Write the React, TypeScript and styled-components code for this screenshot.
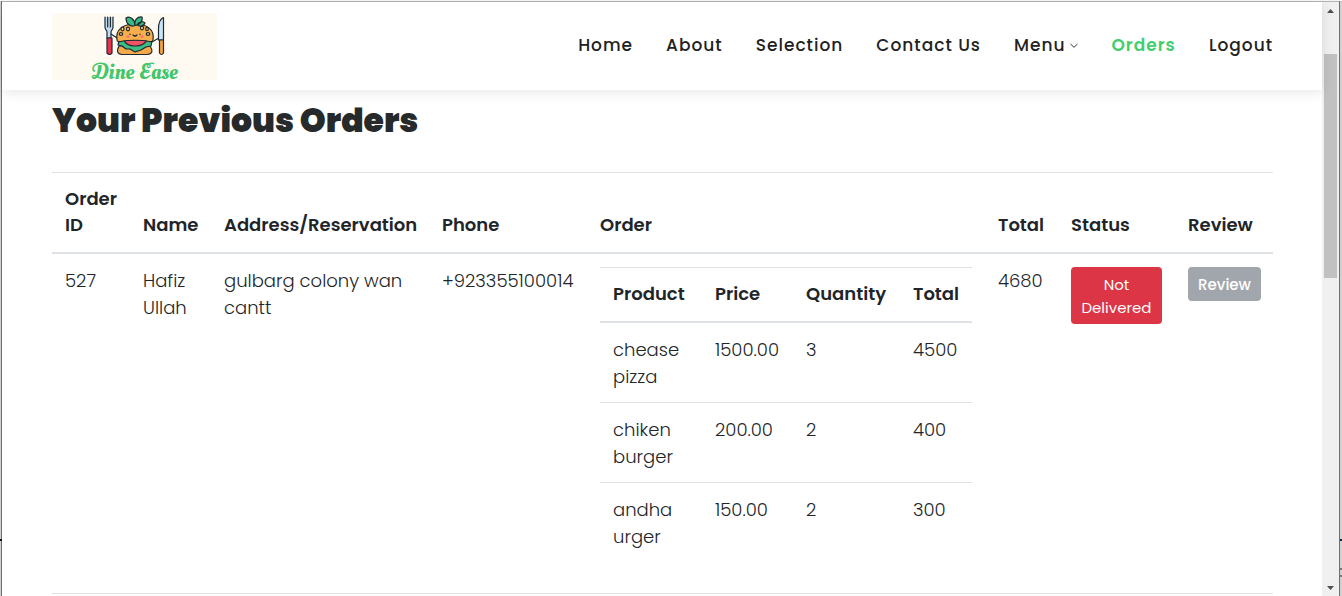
import React from "react";
import styled, { createGlobalStyle } from "styled-components";

const GlobalStyle = createGlobalStyle`
  *, *::before, *::after { box-sizing: border-box; }
  body {
    margin: 0;
    background: #fff;
    color: #212529;
    font-family: Poppins, Inter, "Liberation Sans", sans-serif;
    font-size: 18px;
    font-weight: 300;
    line-height: 27px;
  }
`;

const Window = styled.div`
  display: flex;
  height: 100vh;
  overflow: hidden;
  border-top: 1px solid #f4f4f4;
`;

const Edge = styled.div<{ $side: "left" | "right" }>`
  position: relative;
  flex: none;
  width: ${(p) => (p.$side === "left" ? 2 : 3)}px;
  background: #d0d0d0;
  border-${(p) => (p.$side === "left" ? "right" : "left")}: 1px solid #707070;
`;

const EdgeMark = styled.span<{ $bottom: number; $color: string }>`
  position: absolute;
  left: 0;
  bottom: ${(p) => p.$bottom}px;
  width: 2px;
  height: 2px;
  background: ${(p) => p.$color};
`;

const Page = styled.div`
  flex: 1;
  min-width: 0;
  border-top: 1px solid #b4b4b4;
`;

const Header = styled.header`
  position: relative;
  display: flex;
  align-items: center;
  justify-content: space-between;
  height: 88px;
  padding: 0 49px 0 50px;
  background: #fff;
  box-shadow: 0 2px 12px rgba(0, 0, 0, 0.1);
`;

const LogoLink = styled.a`
  display: flex;
  flex-direction: column;
  align-items: center;
  width: 165px;
  height: 67px;
  padding-top: 3px;
  background: #fffaf1;
  color: #42c66c;
  text-decoration: none;

  svg {
    flex: none;
  }
`;

const LogoName = styled.span`
  font: 400 22px/32px "Oleo Script Swash Caps", "Lobster", "Oleo Script", "Liberation Serif", serif;
`;

const Menu = styled.nav`
  display: flex;
  align-items: center;
  gap: 33px;
  padding-bottom: 2px;
`;

const MenuLink = styled.a<{ $active?: boolean }>`
  display: inline-flex;
  align-items: center;
  gap: 3px;
  color: ${(p) => (p.$active ? "#42cd6e" : "#212121")};
  font-size: 17px;
  font-weight: ${(p) => (p.$active ? 600 : 500)};
  letter-spacing: 1px;
  text-decoration: none;
`;

const Main = styled.main`
  padding: 10px 49px 0 50px;
`;

const Title = styled.h1`
  margin: 0 0 30px;
  color: #262a2a;
  font-size: 33px;
  font-weight: 900;
  line-height: 42px;
`;

const Table = styled.table`
  width: 100%;
  margin-bottom: 19px;
  table-layout: fixed;
  border-spacing: 0;
`;

const Col = styled.col<{ $width: number }>`
  width: ${(p) => p.$width}px;
`;

const HeadCell = styled.th`
  padding: 13px 0 14px 13px;
  border-top: 1px solid #dee2e6;
  border-bottom: 2px solid #dee2e6;
  font-weight: 600;
  line-height: 26px;
  text-align: left;
  vertical-align: bottom;
`;

const Cell = styled.td`
  padding: 13px 13px 12px;
  vertical-align: top;

  tr + tr > & {
    border-top: 1px solid #dee2e6;
  }
`;

const ActionButton = styled.button<{ $tone: "danger" | "muted" }>`
  display: block;
  padding: 6px ${(p) => (p.$tone === "danger" ? 8 : 10)}px 5px;
  border: 0;
  border-radius: 4px;
  background: ${(p) => (p.$tone === "danger" ? "#dc3545" : "#a0a6ab")};
  color: #fff;
  font-family: inherit;
  font-size: 15px;
  font-weight: ${(p) => (p.$tone === "danger" ? 400 : 500)};
  line-height: 23px;
`;

const ScrollBar = styled.div`
  display: flex;
  flex: none;
  flex-direction: column;
  align-items: center;
  width: 17px;
  border-top: 1px solid #b4b4b4;
  background: #f0f0f0;
`;

const Arrow = styled.svg`
  flex: none;
  width: 17px;
  height: 17px;
  fill: #505050;
`;

const Track = styled.div`
  flex: 1;
  width: 13px;
  padding-top: 35px;
`;

const Thumb = styled.div`
  height: 224px;
  background: #c1c1c1;
`;

const Burger = () => (
  <svg width="62" height="40" viewBox="0 0 62 40" aria-hidden="true" strokeLinejoin="round" strokeLinecap="round">
    <g stroke="#202830" strokeWidth="1.2">
      <path d="M7 18 16 24M55 22 46 27" fill="none" />
      <path d="M1 1v10c0 3 2 3 2 5v6h4v-6c0-2 2-2 2-5V1M3.700 1v10M6.400 1v10" fill="#bfdcf2" />
      <path d="M3 22h5v15q-2.500 3-5 0z" fill="#e8324a" />
      <path d="M59.500 1.500C56 3 54.500 8 54.500 13v11h5z" fill="#c9e3f7" />
      <path d="M55.500 24h4v13q-2 3-4 0z" fill="#f4a53a" />
      <path d="M15 30h31q5 8-3 8.500H18q-7-.5-3-8.500z" fill="#f6a94a" />
      <path d="M15 25q16-5 33 0l-1 5-5 1-5 3-6 2-5-3-4 0-4-3-4-1z" fill="#3dbb85" />
      <path d="M20 24h23q-3 6-12 6t-11-6z" fill="#ee5564" />
      <path d="M13 24C11 13 20 8 31 8s20 5 18 16c0 2-3 2-6 1-3-1-20-1-24 0-3 1-6 1-6-1z" fill="#f9ae4c" />
      <path d="M31 9.500c-5 2-9-2-9-7.500 4-3 9 2 9 7.500zM31 9.500c-1-5 2-9 7-8.500 1 4-2 8-7 8.500zM33 9c2-4 6-4 8-2-1 3-5 4-8 2z" fill="#37b982" />
      <g fill="#fde08a">
        <ellipse cx="18.500" cy="13" rx="1.500" ry="1.800" />
        <ellipse cx="24" cy="13" rx="1.500" ry="1.800" />
        <ellipse cx="17" cy="18" rx="1.700" ry="1.300" />
        <ellipse cx="38" cy="12" rx="1.500" ry="1.800" />
        <ellipse cx="43" cy="13" rx="1.300" ry="1.700" />
        <ellipse cx="44" cy="18" rx="1.700" ry="1.300" />
      </g>
      <path d="M26 18v.4M36 18v.4M29 19q2 2 4 0" fill="none" />
    </g>
    <g fill="#f5767f">
      <circle cx="24" cy="20.500" r="1.600" />
      <circle cx="38" cy="20.500" r="1.600" />
    </g>
  </svg>
);

const Chevron = () => (
  <svg width="10" height="8" viewBox="0 0 10 8" fill="none" stroke="#333" aria-hidden="true">
    <path d="M1.500 3 5 6.300 8.500 3" />
  </svg>
);

const links = ["Home", "About", "Selection", "Contact Us", "Menu", "Orders", "Logout"];

const orderColumns = [
  { label: "Order ID", width: 78 },
  { label: "Name", width: 81 },
  { label: "Address/Reservation", width: 218 },
  { label: "Phone", width: 158 },
  { label: "Order", width: 398 },
  { label: "Total", width: 73 },
  { label: "Status", width: 117 },
  { label: "Review", width: 98 },
];

const itemColumns = [
  { label: "Product", width: 102 },
  { label: "Price", width: 91 },
  { label: "Quantity", width: 107 },
  { label: "Total", width: 72 },
];

const items = [
  ["chease pizza", "1500.00", "3", "4500"],
  ["chiken burger", "200.00", "2", "400"],
  ["andha urger", "150.00", "2", "300"],
];

const TableHead = ({ columns }: { columns: { label: string; width: number }[] }) => (
  <>
    <colgroup>
      {columns.map((c) => (
        <Col key={c.label} $width={c.width} />
      ))}
    </colgroup>
    <thead>
      <tr>
        {columns.map((c) => (
          <HeadCell key={c.label} scope="col">
            {c.label}
          </HeadCell>
        ))}
      </tr>
    </thead>
  </>
);

export default function App() {
  return (
    <>
      <GlobalStyle />
      <Window>
        <Edge $side="left">
          <EdgeMark $bottom={55} $color="#101010" />
        </Edge>
        <Page>
          <Header>
            <LogoLink href="#home">
              <Burger />
              <LogoName>Dine Ease</LogoName>
            </LogoLink>
            <Menu>
              {links.map((label) => (
                <MenuLink key={label} href="#" $active={label === "Orders"}>
                  {label}
                  {label === "Menu" && <Chevron />}
                </MenuLink>
              ))}
            </Menu>
          </Header>
          <Main>
            <Title>Your Previous Orders</Title>
            <Table>
              <TableHead columns={orderColumns} />
              <tbody>
                <tr>
                  <Cell>527</Cell>
                  <Cell>Hafiz Ullah</Cell>
                  <Cell>gulbarg colony wan cantt</Cell>
                  <Cell>+923355100014</Cell>
                  <Cell>
                    <Table>
                      <TableHead columns={itemColumns} />
                      <tbody>
                        {items.map((row) => (
                          <tr key={row[0]}>
                            {row.map((value, i) => (
                              <Cell key={i}>{value}</Cell>
                            ))}
                          </tr>
                        ))}
                      </tbody>
                    </Table>
                  </Cell>
                  <Cell>4680</Cell>
                  <Cell>
                    <ActionButton $tone="danger">Not Delivered</ActionButton>
                  </Cell>
                  <Cell>
                    <ActionButton $tone="muted">Review</ActionButton>
                  </Cell>
                </tr>
                <tr>
                  <Cell colSpan={8} />
                </tr>
              </tbody>
            </Table>
          </Main>
        </Page>
        <ScrollBar aria-hidden="true">
          <Arrow viewBox="0 0 17 17">
            <path d="M5 11h7L8.500 7z" />
          </Arrow>
          <Track>
            <Thumb />
          </Track>
          <Arrow viewBox="0 0 17 17">
            <path d="M5 7h7l-3.500 4z" />
          </Arrow>
        </ScrollBar>
        <Edge $side="right">
          <EdgeMark $bottom={55} $color="#10283c" />
          <EdgeMark $bottom={26} $color="#777" />
          <EdgeMark $bottom={19} $color="#777" />
        </Edge>
      </Window>
    </>
  );
}
